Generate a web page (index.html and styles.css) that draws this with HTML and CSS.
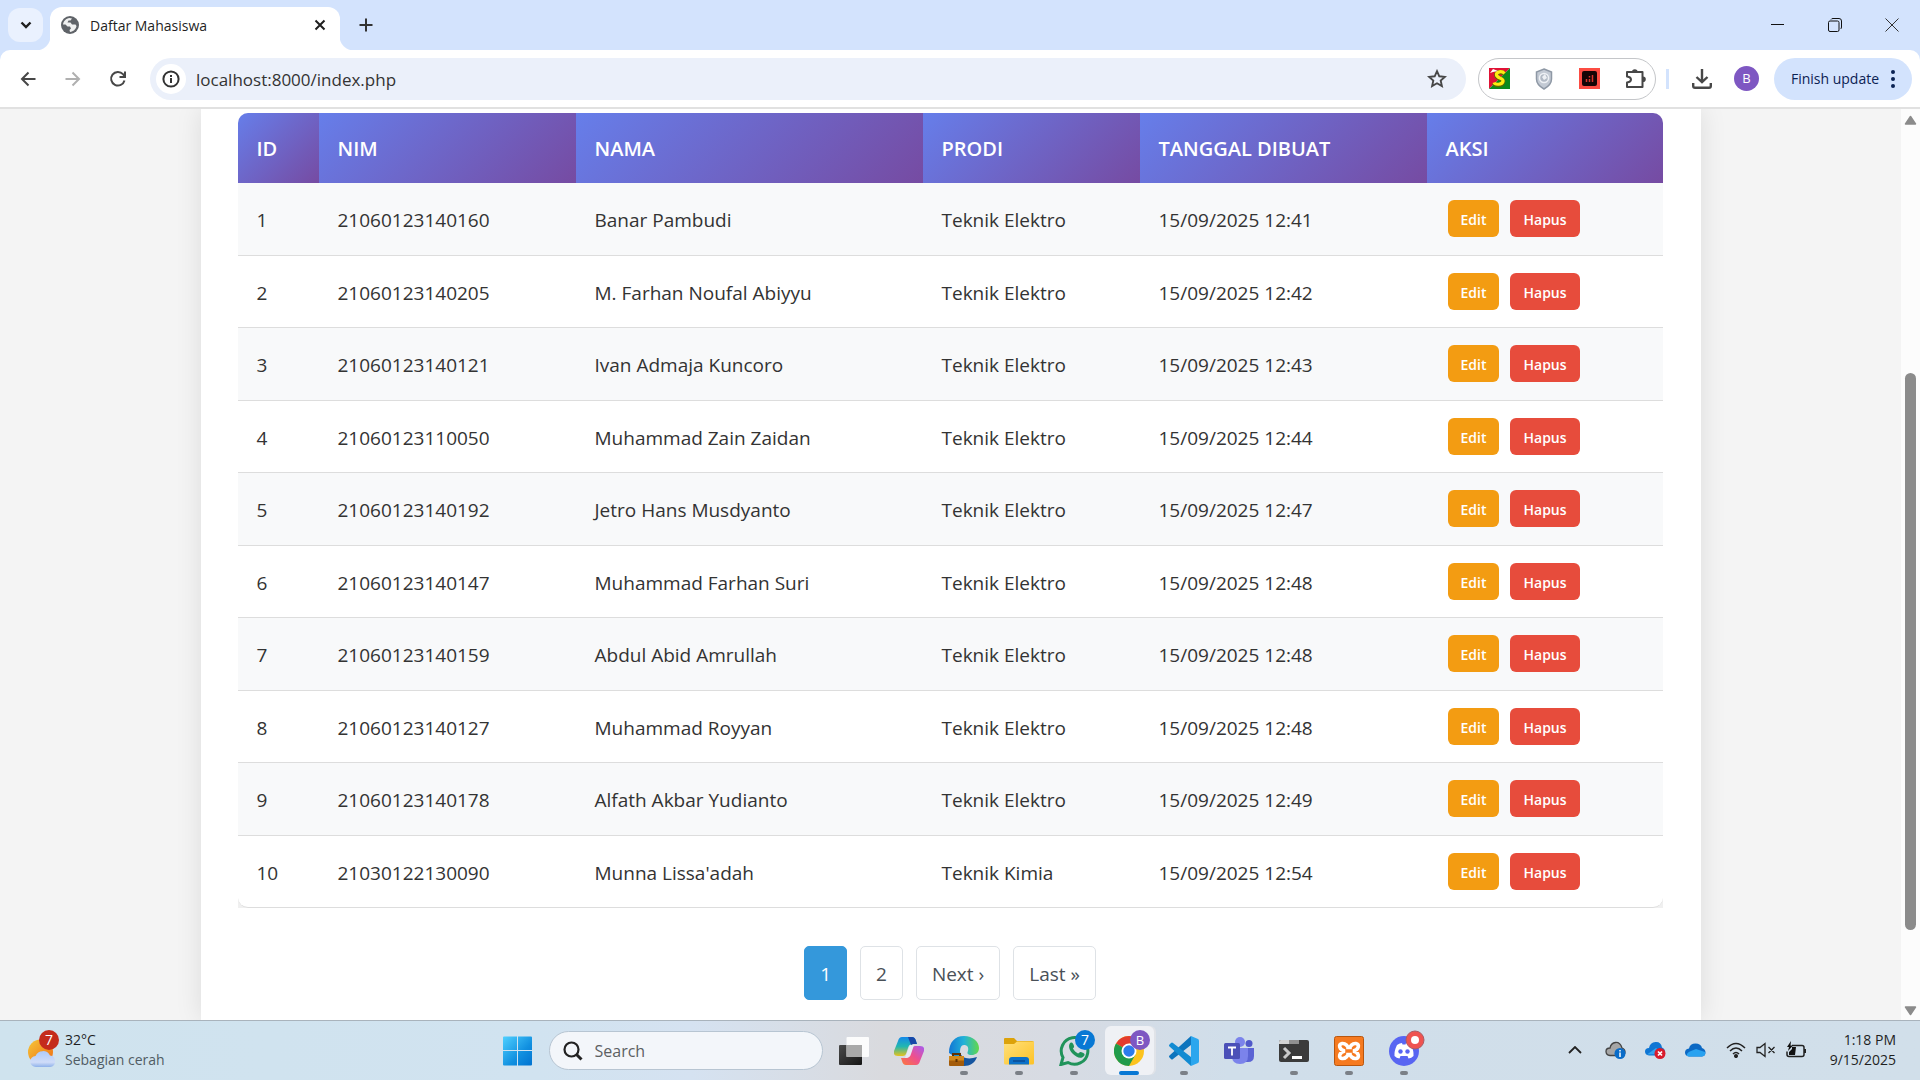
FILE: index.html
```html
<!DOCTYPE html>
<html lang="id">
<head>
<meta charset="utf-8">
<title>Daftar Mahasiswa</title>
<link rel="stylesheet" href="styles.css">
</head>
<body>
<header class="tabstrip">
  <button class="tab-search" aria-label="Search tabs"><svg width="12" height="8" viewBox="0 0 12 8"><path d="M1.500 1.500 6 6l4.500-4.500" fill="none" stroke="#1f1f1f" stroke-width="2.400"/></svg></button>
  <div class="tab">
    <svg width="18" height="18" viewBox="0 0 18 18"><circle cx="9" cy="9" r="9" fill="#5f6368"/><path d="M2 8.500C2.500 5 5 2.500 8.500 2L11 2.500 9.500 4.500H7.500L6.500 6.500h3l1.500 2h3.500l1 1.500C15 13 12.500 15.500 9 16l-.5-2 1.500-1.500-1-2H6.500L4.500 8.500z" fill="#fff" opacity=".9"/></svg>
    <span class="tab-title">Daftar Mahasiswa</span>
    <button class="tab-close" aria-label="Close tab"><svg width="12" height="12" viewBox="0 0 12 12"><path d="m1.500 1.500 9 9m0-9-9 9" stroke="#1f1f1f" stroke-width="2"/></svg></button>
  </div>
  <button class="new-tab" aria-label="New tab"><svg width="14" height="14" viewBox="0 0 14 14"><path d="M7 .5v13M.5 7h13" stroke="#333" stroke-width="2"/></svg></button>
  <div class="window-controls">
    <button aria-label="Minimize"><svg width="14" height="14" viewBox="0 0 14 14"><path d="M0 6.500h13" stroke="#111"/></svg></button>
    <button aria-label="Restore"><svg width="14" height="14" viewBox="0 0 14 14" fill="none" stroke="#111"><rect x=".5" y="3" width="10.500" height="10.500" rx="1.500"/><path d="M3 1.500Q3.500.5 5 .5h6Q13.500.5 13.500 3v6q0 1.500-1 2"/></svg></button>
    <button aria-label="Close"><svg width="14" height="14" viewBox="0 0 14 14"><path d="m.5.5 13 13m0-13-13 13" stroke="#333"/></svg></button>
  </div>
</header>
<div class="toolbar-wrap">
<div class="toolbar">
  <div class="nav">
    <button aria-label="Back"><svg width="16" height="16" viewBox="0 0 16 16" fill="none" stroke="#474747" stroke-width="2"><path d="M15.500 8H2M8.500 1.500 2 8l6.500 6.500"/></svg></button>
    <button aria-label="Forward"><svg width="16" height="16" viewBox="0 0 16 16" fill="none" stroke="#b0b0b0" stroke-width="2"><path d="M.5 8H14M7.500 1.500 14 8l-6.500 6.500"/></svg></button>
    <button aria-label="Reload"><svg width="18" height="18" viewBox="0 0 18 18" fill="none" stroke="#474747" stroke-width="2"><path d="M15.500 10.500A6.800 6.800 0 1 1 14 4.200L15.500 6M16 1.500v5.500h-5.500"/></svg></button>
  </div>
  <div class="omnibox">
    <button class="site-info" aria-label="Site information"><svg width="18" height="18" viewBox="0 0 18 18"><circle cx="9" cy="9" r="7.600" fill="none" stroke="#333" stroke-width="2"/><path d="M9 8v5M9 5v2" stroke="#333" stroke-width="2"/></svg></button>
    <input class="url" aria-label="Address" value="localhost:8000/index.php">
    <button class="star" aria-label="Bookmark"><svg width="20" height="20" viewBox="0 0 20 20"><path d="m10 2.200 2.300 5.100 5.500.6-4.100 3.700 1.200 5.500L10 14.300l-4.900 2.800 1.200-5.500-4.100-3.700 5.500-.6z" fill="none" stroke="#474747" stroke-width="1.900"/></svg></button>
  </div>
  <div class="extensions">
    <svg width="21" height="21" viewBox="0 0 21 21"><path fill="#e01235" d="M0 0h21L0 21z"/><path fill="#0a8a1d" d="M21 0v21H0z"/><path d="M15.500 6C13 3 7 4 7.500 7.500S15 10 14 14s-8 3.500-9 1" fill="none" stroke="#5a6a00" stroke-width="4.600"/><path d="M15.500 5.500C13 2.500 7 3.500 7.500 7S15 10 14 13.500s-8 3.500-9 1" fill="none" stroke="#ffeb12" stroke-width="3.200"/><path d="M1 5 4 1l5 2-5 1z" fill="#fff"/></svg>
    <svg width="18" height="22" viewBox="0 0 18 22"><path d="m9 1 7.500 3v7c0 5-3 7.500-7.500 10C4.500 18.500 1.500 16 1.500 11V4z" fill="#c3cad4" stroke="#8e98a5" stroke-width="1.500"/><circle cx="9" cy="10" r="4.500" fill="#b1b9c4" stroke="#eef1f5" stroke-width="1.500"/><path d="m7 9 3-3 2 4-3 2z" fill="#edf0f4"/></svg>
    <svg width="21" height="21" viewBox="0 0 21 21"><path fill="#fc4c43" d="M0 0h21v21H0z"/><rect x="3" y="3" width="15" height="15" rx="2" fill="#150506"/><path d="M7.500 14v-3m3 3v-3m3 3V7M10.500 8v1.500" stroke="#d8352d" stroke-width="1.500"/></svg>
    <svg width="21" height="21" viewBox="0 0 21 21"><path d="M2 4h15.500v15H2v-4.500q4-.5 4-3T2 8.500z" fill="none" stroke="#474747" stroke-width="2" stroke-linejoin="round"/><path d="M7 4a2.800 2.800 0 0 1 5.600 0zM18 8.500a2.800 2.800 0 0 1 0 5.600z" fill="#474747"/></svg>
  </div>
  <span class="divider"></span>
  <button class="download" aria-label="Downloads"><svg width="20" height="20" viewBox="0 0 20 20" fill="none" stroke="#474747" stroke-width="2.400"><path d="M10 0v13M4.500 8 10 13.200 15.500 8M1.200 14v3q0 1.800 1.800 1.800h14q1.800 0 1.800-1.800v-3"/></svg></button>
  <span class="avatar">B</span>
  <button class="update">Finish update <svg width="4" height="18" viewBox="0 0 4 18" fill="#0b2253"><circle cx="2" cy="2" r="2"/><circle cx="2" cy="9" r="2"/><circle cx="2" cy="16" r="2"/></svg></button>
</div>
</div>
<div class="viewport">
<main class="page">
  <div class="card">
    <table class="students">
      <colgroup><col class="c-id"><col class="c-nim"><col class="c-nama"><col class="c-prodi"><col class="c-tanggal"><col class="c-aksi"></colgroup>
      <thead><tr><th>ID</th><th>NIM</th><th>NAMA</th><th>PRODI</th><th>TANGGAL DIBUAT</th><th>AKSI</th></tr></thead>
      <tbody>
        <tr><td>1</td><td>21060123140160</td><td>Banar Pambudi</td><td>Teknik Elektro</td><td>15/09/2025 12:41</td><td><div class="actions"><a class="btn edit" href="#">Edit</a><a class="btn hapus" href="#">Hapus</a></div></td></tr>
        <tr><td>2</td><td>21060123140205</td><td>M. Farhan Noufal Abiyyu</td><td>Teknik Elektro</td><td>15/09/2025 12:42</td><td><div class="actions"><a class="btn edit" href="#">Edit</a><a class="btn hapus" href="#">Hapus</a></div></td></tr>
        <tr><td>3</td><td>21060123140121</td><td>Ivan Admaja Kuncoro</td><td>Teknik Elektro</td><td>15/09/2025 12:43</td><td><div class="actions"><a class="btn edit" href="#">Edit</a><a class="btn hapus" href="#">Hapus</a></div></td></tr>
        <tr><td>4</td><td>21060123110050</td><td>Muhammad Zain Zaidan</td><td>Teknik Elektro</td><td>15/09/2025 12:44</td><td><div class="actions"><a class="btn edit" href="#">Edit</a><a class="btn hapus" href="#">Hapus</a></div></td></tr>
        <tr><td>5</td><td>21060123140192</td><td>Jetro Hans Musdyanto</td><td>Teknik Elektro</td><td>15/09/2025 12:47</td><td><div class="actions"><a class="btn edit" href="#">Edit</a><a class="btn hapus" href="#">Hapus</a></div></td></tr>
        <tr><td>6</td><td>21060123140147</td><td>Muhammad Farhan Suri</td><td>Teknik Elektro</td><td>15/09/2025 12:48</td><td><div class="actions"><a class="btn edit" href="#">Edit</a><a class="btn hapus" href="#">Hapus</a></div></td></tr>
        <tr><td>7</td><td>21060123140159</td><td>Abdul Abid Amrullah</td><td>Teknik Elektro</td><td>15/09/2025 12:48</td><td><div class="actions"><a class="btn edit" href="#">Edit</a><a class="btn hapus" href="#">Hapus</a></div></td></tr>
        <tr><td>8</td><td>21060123140127</td><td>Muhammad Royyan</td><td>Teknik Elektro</td><td>15/09/2025 12:48</td><td><div class="actions"><a class="btn edit" href="#">Edit</a><a class="btn hapus" href="#">Hapus</a></div></td></tr>
        <tr><td>9</td><td>21060123140178</td><td>Alfath Akbar Yudianto</td><td>Teknik Elektro</td><td>15/09/2025 12:49</td><td><div class="actions"><a class="btn edit" href="#">Edit</a><a class="btn hapus" href="#">Hapus</a></div></td></tr>
        <tr><td>10</td><td>21030122130090</td><td>Munna Lissa'adah</td><td>Teknik Kimia</td><td>15/09/2025 12:54</td><td><div class="actions"><a class="btn edit" href="#">Edit</a><a class="btn hapus" href="#">Hapus</a></div></td></tr>
      </tbody>
    </table>
    <nav class="pagination" aria-label="Halaman">
      <a class="current" href="#">1</a><a href="#">2</a><a href="#">Next ›</a><a href="#">Last »</a>
    </nav>
  </div>
</main>
<div class="scrollbar">
  <svg width="13" height="10" viewBox="0 0 13 10"><path d="M6.500 1.500 11.500 9h-10z" fill="#8b8b8b" stroke="#8b8b8b" stroke-width="1.500" stroke-linejoin="round"/></svg>
  <div class="track"><div class="thumb"></div></div>
  <svg width="13" height="10" viewBox="0 0 13 10"><path d="M6.500 8.500 11.500 1h-10z" fill="#8b8b8b" stroke="#8b8b8b" stroke-width="1.500" stroke-linejoin="round"/></svg>
</div>
</div>
<footer class="taskbar">
  <div class="weather">
    <svg width="32" height="38" viewBox="0 0 32 38"><defs><linearGradient id="sun" x1="0" y1="0" x2="1" y2="1"><stop stop-color="#f5c73a"/><stop offset="1" stop-color="#f06a10"/></linearGradient><linearGradient id="cl" x1="0" y1="0" x2="0" y2="1"><stop stop-color="#aecbfa"/><stop offset=".7" stop-color="#cfdcf8"/><stop offset="1" stop-color="#8eb1ea"/></linearGradient></defs><circle cx="12.500" cy="22" r="12.500" fill="url(#sun)"/><path d="M8 37a5.500 5.500 0 0 1-.5-11 8 8 0 0 1 14.500-.5A5.800 5.800 0 0 1 22 37z" fill="url(#cl)"/><circle cx="21" cy="10" r="10" fill="#c42b1c"/><text x="21" y="15" text-anchor="middle" class="badge-text">7</text></svg>
    <div class="weather-text"><span>32°C</span><span class="muted">Sebagian cerah</span></div>
  </div>
  <div class="apps">
    <button class="start" aria-label="Start"><svg width="30" height="30" viewBox="0 0 30 30"><defs><linearGradient id="win" x1="0" y1="0" x2="1" y2="1"><stop stop-color="#4fd0ff"/><stop offset=".6" stop-color="#1190e0"/><stop offset="1" stop-color="#0072d0"/></linearGradient></defs><path d="M0 1.500Q0 .5 1 .5h13V14H0zM15 .5h13q1 0 1 1V14H15zM0 15h14v14.500H1q-1 0-1-1zM15 15h14v13.500q0 1-1 1H15z" fill="url(#win)"/></svg></button>
    <label class="search"><svg width="20" height="20" viewBox="0 0 20 20" fill="none" stroke="#222" stroke-width="2.200"><circle cx="8.500" cy="8.500" r="7"/><path d="m13.500 13.500 5 5" stroke-width="3"/></svg><input type="text" placeholder="Search" aria-label="Search"></label>
    <button class="app" aria-label="Task view"><svg width="30" height="30" viewBox="0 0 30 30"><defs><linearGradient id="tv" x1="0" y1="0" x2="1" y2="1"><stop stop-color="#4a4a4a"/><stop offset="1" stop-color="#151515"/></linearGradient></defs><rect y="9" width="23" height="20" rx="1" fill="url(#tv)"/><rect x="7.500" y="1" width="22.500" height="20" rx="1" fill="#fff" opacity=".9"/><path d="M7.500 9H23v12H7.500z" fill="#a9a9a9"/></svg></button>
    <button class="app" aria-label="Copilot"><svg width="30" height="30" viewBox="0 0 30 30"><defs><linearGradient id="c1" x1="0" y1="0" x2="0" y2="1"><stop stop-color="#1489ea"/><stop offset=".5" stop-color="#22b7b0"/><stop offset="1" stop-color="#e7c21c"/></linearGradient><linearGradient id="c2" x1="0" y1="1" x2="1" y2="0"><stop stop-color="#fc7a3a"/><stop offset=".5" stop-color="#ee4f8e"/><stop offset="1" stop-color="#a65cf0"/></linearGradient></defs><path d="M8 1h10q3 0 4 4l1 3h-4q-4 0-5 4l-2 6q-1 2-3 2H4q-5 0-4-5L4 5q1-4 4-4z" fill="url(#c1)"/><path d="M22 29H12q-3 0-4-4l-1-3h4q4 0 5-4l2-6q1-2 3-2h5q5 0 4 5l-4 10q-1 4-4 4z" fill="url(#c2)"/><path d="M14 1h4q3 0 4 4l1 3h-4l-2 1z" fill="#1748a8"/><path d="M16 9h4l-3 9q-1 4-5 4h-1z" fill="#e7eaf4"/></svg></button>
    <button class="app running" aria-label="Edge"><svg width="30" height="30" viewBox="0 0 30 30"><defs><linearGradient id="e1"><stop stop-color="#1276d4"/><stop offset=".5" stop-color="#22b2d8"/><stop offset="1" stop-color="#62d84a"/></linearGradient></defs><path d="M0 17C0 6 6 0 15 0s15 6 15 12c0 5-4 7-7 7-5 0-5-2-4-4 1-4-1-6-4-6-3 0-4 3-4 8v7z" fill="url(#e1)"/><path d="M11 16c1 6 8 8 17 5-2 6-7 9-13 9-4 0-4-14-4-14z" fill="#15559f"/><rect y="20" width="15" height="10" rx="1" fill="#a35b0a"/><path d="M0 20h15v4.500H0z" fill="#d38a1d"/><path d="M4 20v-2h7v2M7.500 23v3" fill="none" stroke="#603305" stroke-width="2"/></svg></button>
    <button class="app running" aria-label="File Explorer"><svg width="30" height="30" viewBox="0 0 30 30"><defs><linearGradient id="fo" x1="0" y1="0" x2="1" y2="1"><stop stop-color="#ffe07a"/><stop offset="1" stop-color="#fdc226"/></linearGradient></defs><path d="M0 3q0-1 1-1h9l3 3h15q2 0 2 2v8H0z" fill="#dca20a"/><path d="M0 8h10l3-2.500h17V27q0 1.500-1.500 1.500h-27Q0 28.500 0 27z" fill="url(#fo)"/><path d="M5 28.500V24q0-3 3-3h14q3 0 3 3v4.500z" fill="#0c71c8"/><path d="M9 25h12" stroke="#0a4b93" stroke-width="1.500"/></svg></button>
    <button class="app running" aria-label="WhatsApp"><svg class="spill" width="36" height="36" viewBox="0 0 36 36"><path d="M2 34.500 4 27.500A13.300 13.300 0 1 1 9 32.500z" fill="none" stroke="#20935a" stroke-width="3"/><path d="M10.500 14c2-3 3.500-1 4.500 2 .5 1.500-1 2-1 2.500 1 2 3 4 5 5 1 0 1.500-2 3-1.500 3 1 5 2 2.500 4.500-3 3-8 0-10.500-2.500s-5-6.500-3.500-10z" fill="#20935a"/><circle cx="26" cy="10" r="10" fill="#0878d4"/><text x="26" y="15" text-anchor="middle" class="badge-text">7</text></svg></button>
    <button class="app active" aria-label="Chrome"><svg class="spill" width="36" height="36" viewBox="0 0 36 36"><circle cx="15" cy="21" r="15" fill="#fcc31e"/><path d="M15 21 2 13.500a15 15 0 0 1 26 0H15z" fill="#e33b2e"/><path d="M2 13.500A15 15 0 0 0 15 36l6.500-11.500L15 21z" fill="#219b4b"/><circle cx="15" cy="21" r="7.500" fill="#fff"/><circle cx="15" cy="21" r="5.700" fill="#2c7cec"/><circle cx="26" cy="10" r="10" fill="#7e57c2"/><text x="26" y="15" text-anchor="middle" class="badge-letter">B</text></svg></button>
    <button class="app running" aria-label="Visual Studio Code"><svg width="30" height="30" viewBox="0 0 30 30"><path d="m22 0 7 3q1 .5 1 2v20q0 1.500-1 2l-7 3z" fill="#2ba6ee"/><path d="M22 0v9L4 23q-1 1-2 0l-1.500-1.500q-1-1 0-2z" fill="#0d74bd"/><path d="M22 30v-9L4 7Q3 6 2 7L.5 8.500q-1 1 0 2z" fill="#128bd2"/></svg></button>
    <button class="app" aria-label="Teams"><svg width="30" height="30" viewBox="0 0 30 30"><circle cx="16" cy="6" r="5" fill="#7b83eb"/><circle cx="25" cy="7.500" r="3.500" fill="#5059c9"/><path d="M20 12h10v8q0 6-6 6h-4z" fill="#5b64d4"/><path d="M8 12h16v8q0 8-8 8t-8-8z" fill="#7b83eb"/><rect y="7" width="16" height="16" rx="1.500" fill="#4b50b8"/><path d="M4 11.500h8M8 11v8.500" stroke="#fff" stroke-width="1.800"/></svg></button>
    <button class="app running" aria-label="Terminal"><svg width="30" height="30" viewBox="0 0 30 30"><rect y="4" width="30" height="22" rx="2" fill="#3b3b3b"/><path d="M0 8V6q0-2 2-2h8v4z" fill="#d3d3d3"/><path d="M10 4h10v4H10z" fill="#909090"/><path d="m5 12 5 5-5 5" fill="none" stroke="#c9c9c9" stroke-width="3"/><path d="M13 21.500h10" stroke="#fff" stroke-width="3"/></svg></button>
    <button class="app running" aria-label="XAMPP"><svg width="30" height="30" viewBox="0 0 30 30"><rect x=".5" y=".5" width="29" height="29" rx="2" fill="#f67a20" stroke="#b9560e"/><path d="M11 15C5 14 4 8 8 7.500s6 3.500 6 4h2c0-.5 2-4.500 6-4s3 6.500-3 7.500c6 1 7 7 3 7.500s-6-3.500-6-4h-2c0 .5-2 4.500-6 4s-3-6.500 3-7.500z" fill="none" stroke="#fff" stroke-width="3.600"/></svg></button>
    <button class="app running" aria-label="Discord"><svg class="spill" width="36" height="36" viewBox="0 0 36 36"><circle cx="15" cy="21" r="15" fill="#5865f2"/><path d="M8 15q3-2 5-2l.5 1.500h3L17 13q2 0 5 2 3 6 2.500 11-2 2-5 2.500L18.500 26h-7l-1 2.500q-3-.5-5-2.500Q5 21 8 15z" fill="#fff"/><circle cx="11.500" cy="21.500" r="2.200" fill="#5865f2"/><circle cx="18.500" cy="21.500" r="2.200" fill="#5865f2"/><circle cx="26" cy="10" r="9" fill="#ef5350" stroke="#aa5c64"/><circle cx="26" cy="10" r="4" fill="#fff"/></svg></button>
  </div>
  <div class="tray">
    <svg width="14" height="8" viewBox="0 0 14 8"><path d="m1 7 6-6 6 6" fill="none" stroke="#222" stroke-width="1.800"/></svg>
    <svg class="t1" width="21" height="18" viewBox="0 0 21 18"><path d="M5 14.500Q1 14 1 10.500T5 7q1-5 5.500-5.500T17 7q3 1 3 4t-3 3.500z" fill="#a6a6a6" stroke="#444" stroke-width="1.300"/><circle cx="15" cy="12.500" r="5.500" fill="#0a6cc8"/><path d="M15 11.500V16M15 9v1.500" stroke="#fff" stroke-width="1.500"/></svg>
    <svg class="t2" width="21" height="18" viewBox="0 0 21 18"><path d="M4 14.500Q0 14 0 10.500T4 7q1-5.500 6.500-6T17 6.500q3 1 3 4.500t-3 3.500z" fill="#0f76d4"/><path d="m2 13.500 9-6.500 8 6z" fill="#36a4ee"/><circle cx="15" cy="12.500" r="5.500" fill="#d81b2c"/><path d="m13 10.500 4 4m0-4-4 4" stroke="#fff" stroke-width="1.700"/></svg>
    <svg class="t3" width="21" height="14" viewBox="0 0 21 14"><path d="M4 13.500Q0 13 0 9.500T4 5.500Q5 .5 10.500.5T17 5q3.500 1 3.500 4.500T17 13.500z" fill="#0c69c4"/><path d="M2 13Q1 10 6 8l5-2 9 3q1 4-3 4.500H4z" fill="#29a2f0"/></svg>
    <svg class="t4" width="20" height="16" viewBox="0 0 20 16" fill="none" stroke="#222" stroke-width="1.500"><path d="M1 6Q10-3 19 6M4 9q6-6 12 0M7 12q3-3 6 0"/><circle cx="10" cy="14" r="1.300" fill="#222"/></svg>
    <svg width="20" height="16" viewBox="0 0 20 16" fill="none" stroke="#222" stroke-width="1.300"><path d="M1 5.500h3L9 1.500v13l-5-4H1zM12.500 5l6 6m0-6-6 6"/></svg>
    <svg class="t5" width="20" height="17" viewBox="0 0 20 17"><path d="M6 4.500h10q2 0 2 2v7q0 2-2 2H3q-2 0-2-2v-3" fill="none" stroke="#222" stroke-width="1.500"/><path d="M3 14V11l3-3V6h4L9 14zM5 0 1 6h2L2 10l5-5.500H4.500z" fill="#111"/><path d="M18 8h2v4h-2z" fill="#222"/></svg>
    <div class="clock"><span>1:18 PM</span><span>9/15/2025</span></div>
  </div>
</footer>
</body>
</html>
```
FILE: styles.css
```css
* { box-sizing: border-box; }
html { height: 100%; }
body { margin: 0; height: 100%; display: flex; flex-direction: column; overflow: hidden; font-family: "Open Sans", "Noto Sans", sans-serif; color: #333; background: #f4f4f4; }
button { border: 0; padding: 0; background: none; font: inherit; color: inherit; display: flex; align-items: center; justify-content: center; }
input { border: 0; padding: 0; background: none; font: inherit; color: inherit; outline: 0; }
svg { display: block; flex: none; }

/* Browser frame */
.tabstrip { height: 50px; flex: none; display: flex; background: #d3e3fd; }
.tab-search { width: 35px; height: 34px; margin: 8px 7px 0 8px; border-radius: 12px; background: #eaf1fe; }
.tab { position: relative; width: 290px; height: 43px; margin-top: 7px; padding: 0 14px 8px 11px; display: flex; align-items: center; background: #fff; border-radius: 12px 12px 0 0; }
.tab::before, .tab::after { content: ""; position: absolute; bottom: 0; width: 14px; height: 14px; }
.tab::before { right: 100%; background: radial-gradient(circle at 0 0, transparent 14px, #fff 15px); }
.tab::after { left: 100%; background: radial-gradient(circle at 100% 0, transparent 14px, #fff 15px); }
.tab-title { flex: 1; margin-left: 11px; padding-top: 1px; font-size: 14px; color: #1f1f1f; }
.new-tab { width: 36px; height: 36px; margin: 7px 0 0 8px; }
.window-controls { margin-left: auto; display: flex; align-items: center; }
.window-controls button { width: 57px; height: 50px; }
.toolbar-wrap { flex: none; background: #d3e3fd; border-bottom: 2px solid #e1e1e1; }
.toolbar { height: 57px; padding: 0 8px 0 10px; display: flex; align-items: center; background: #fff; border-radius: 10px 10px 0 0; }
.nav { display: flex; margin-right: 15px; }
.nav button { width: 35px; height: 35px; margin-right: 10px; }
.nav button:last-child { margin-right: 0; }
.omnibox { flex: 1; height: 42px; padding: 0 19px 0 6px; display: flex; align-items: center; background: #ebf0fa; border-radius: 21px; }
.site-info { width: 30px; height: 30px; border-radius: 50%; background: #fff; }
.url { flex: 1; height: 28px; margin-left: 10px; padding-top: 1px; font-size: 17px; color: #333; }
.extensions { width: 178px; height: 42px; margin-left: 12px; padding: 0 9px 0 10px; display: flex; align-items: center; justify-content: space-between; border: 1px solid #c4c6c9; border-radius: 21px; }
.divider { width: 3px; height: 20px; margin: 0 23px 0 10px; background: #d3e3fd; }
.download { width: 20px; margin-right: 22px; }
.avatar { width: 25px; height: 25px; border-radius: 50%; background: #7e57c2; color: #fff; font-size: 13px; line-height: 25px; text-align: center; }
.update { width: 138px; height: 42px; margin-left: 15px; gap: 12px; border-radius: 21px; background: #d3e3fd; color: #0b2253; font-size: 14px; white-space: nowrap; }

/* Page */
.viewport { flex: 1; min-height: 0; display: flex; overflow: hidden; }
.page { flex: 1; min-width: 0; display: flex; justify-content: center; }
.card { width: 100%; max-width: 1500px; padding: 4px 38px 0 37px; background: #fff; box-shadow: 0 0 25px rgba(0, 0, 0, .1); }
.students { width: 100%; table-layout: fixed; border-collapse: separate; border-spacing: 0; border-radius: 10px 10px 0 0; overflow: hidden; background: #f0f0f0; font-size: 19px; line-height: 28px; }
.c-id { width: 81px; }
.c-nim { width: 257px; }
.c-nama { width: 347px; }
.c-prodi { width: 217px; }
.c-tanggal { width: 287px; }
th { height: 70px; padding: 1px 19px 0; text-align: left; font-size: 20px; font-weight: 600; color: #fff; background: linear-gradient(135deg, #667eea 0%, #764ba2 100%); }
td { height: 72px; padding: 2px 19px 0; border-bottom: 1px solid #ddd; background: #fff; white-space: nowrap; }
tr:nth-child(odd) td { height: 73px; background: #f8f9fa; }
tbody tr:last-child td:first-child { border-bottom-left-radius: 10px; }
tbody tr:last-child td:last-child { border-bottom-right-radius: 10px; }
.actions { display: flex; gap: 11px; margin-left: 2px; }
.btn { height: 37px; padding: 0 13px; margin-bottom: 3px; border-radius: 6px; color: #fff; font-size: 14px; font-weight: 600; line-height: 39px; text-decoration: none; }
.edit { background: #f39c12; }
.hapus { background: #e74c3c; }
.pagination { display: flex; justify-content: center; gap: 13px; margin-top: 38px; }
.pagination a { height: 54px; padding: 0 15px; border: 1px solid #dee2e6; border-radius: 5px; color: #495057; font-size: 19px; line-height: 54px; text-decoration: none; }
.pagination .current { background: #3498db; border-color: #3498db; color: #fff; }

.scrollbar { width: 19px; padding: 6px 0 4px; display: flex; flex-direction: column; align-items: center; background: #fcfcfc; }
.track { flex: 1; width: 11px; display: flex; flex-direction: column; padding: 243px 0 76px; }
.track { padding-top: 248px; }
.thumb { flex: 1; border-radius: 6px; background: #8b8b8b; }

/* Taskbar */
.taskbar { height: 60px; flex: none; display: grid; grid-template-columns: 1fr auto 1fr; align-items: center; border-top: 1px solid #a9b3bc; background: linear-gradient(90deg, #cfe3ee 0%, #d1e3f0 28%, #d5e2f1 36%, #d9dade 46%, #d7dbe3 55%, #d0deea 64%, #d1dfea 100%); }
.weather { display: flex; padding: 0 0 2px 28px; gap: 5px; color: #1f1f1f; }
.weather-text { display: flex; flex-direction: column; font-size: 14px; line-height: 20px; }
.muted { color: #505c64; }
.badge-text { font-size: 14px; fill: #fff; }
.badge-letter { font-size: 13px; fill: #fff; }
.apps { display: flex; align-items: center; padding-left: 14px; }
.start { width: 30px; margin-right: 16px; }
.search { width: 274px; height: 39px; margin-right: 4px; padding-left: 13px; display: flex; align-items: center; gap: 12px; border: 1px solid #b7c5d2; border-radius: 20px; background: #f3f6fa; font-size: 16px; }
.search input { width: 180px; }
.search input::placeholder { color: #5c6063; opacity: 1; }
.app { position: relative; width: 49px; height: 49px; margin: 0 3px; border-radius: 6px; }
.spill { margin: -6px -6px 0 0; }
.running::after, .active::after { content: ""; position: absolute; left: 50%; bottom: 0; width: 8px; height: 4px; margin-left: -4px; border-radius: 2px; background: #7b8087; }
.active { background: #eff1f5; box-shadow: 2px 0 0 #e0e3e8; }
.active::after { width: 20px; margin-left: -10px; background: #0878d4; }
.tray { display: flex; align-items: center; justify-content: flex-end; padding: 0 24px 2px 0; color: #1f1f1f; }
.t1 { margin-left: 23px; }
.t2, .t3 { margin-left: 19px; }
.t4 { margin: 0 10px 0 20px; }
.t5 { margin-left: 10px; }
.clock { width: 90px; display: flex; flex-direction: column; text-align: right; font-size: 14px; line-height: 20px; }
```
